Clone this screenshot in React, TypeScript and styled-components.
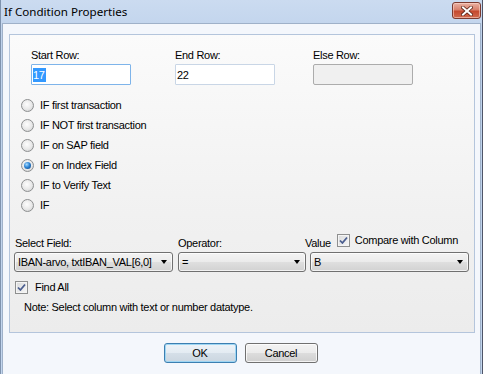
import React from "react";
import styled, { createGlobalStyle } from "styled-components";

const GlobalStyle = createGlobalStyle`
  html, body {
    margin: 0;
    padding: 0;
    background: #ffffff;
  }
  body {
    font-family: "Liberation Sans", Arial, sans-serif;
    font-size: 11px;
    letter-spacing: -0.3px;
    color: #000;
  }
`;

const SWindow = styled.div`
  width: 483px;
  height: 374px;
  box-sizing: border-box;
  border-left: 1px solid #7f93ae;
  border-right: 1px solid #4f5568;
  background: linear-gradient(#cbdbf0, #bed2ec 40px, #c3d6ee);
  display: flex;
  flex-direction: column;
  overflow: hidden;
`;

const STitleBar = styled.div`
  height: 23px;
  flex: none;
  display: flex;
  align-items: flex-start;
  justify-content: space-between;
  padding: 0 1px 0 3px;
`;

const STitle = styled.div`
  font-family: "Noto Sans", "Open Sans", sans-serif;
  font-size: 11.6px;
  letter-spacing: 0;
  line-height: 23px;
  color: #000;
`;

const SCloseButton = styled.div`
  margin-top: 2px;
  width: 29px;
  height: 17px;
  box-sizing: border-box;
  border: 1px solid #7b3a30;
  border-radius: 3px;
  background: linear-gradient(#eab2a4 0%, #d8806c 45%, #c5492f 55%, #d06a4f 100%);
  box-shadow: inset 0 0 0 1px rgba(255, 220, 210, 0.55);
  display: flex;
  align-items: center;
  justify-content: center;
`;

const SClient = styled.div`
  flex: 1;
  margin: 0 1px;
  border: 1px solid #9fb1c9;
  border-bottom: none;
  background: #f4f7fc;
  display: flex;
  flex-direction: column;
`;

const SPanel = styled.div`
  margin: 10px 0 0 6px;
  width: 466px;
  height: 299px;
  box-sizing: border-box;
  border: 1px solid #b4c5dc;
  background: linear-gradient(#fbfbfb, #f1f1f1 60%, #ececec);
  display: flex;
  flex-direction: column;
`;

const STopRow = styled.div`
  display: grid;
  grid-template-columns: 144px 138px 100px;
  padding: 14px 0 0 21px;
`;

const SField = styled.div`
  display: flex;
  flex-direction: column;
`;

const SLabel = styled.div`
  line-height: 13px;
  margin-bottom: 2px;
  white-space: nowrap;
`;

const STextBox = styled.div<{ $focused?: boolean; $disabled?: boolean }>`
  width: 100px;
  height: 21px;
  box-sizing: border-box;
  border: 1px solid
    ${(p) => (p.$disabled ? "#acacac" : p.$focused ? "#7eb4ea" : "#c9d6e6")};
  border-radius: ${(p) => (p.$disabled ? "2px" : "1px")};
  background: ${(p) => (p.$disabled ? "#f0f0f0" : "#ffffff")};
  padding: 0 1px;
  display: flex;
  align-items: center;
`;

const SSelection = styled.span`
  background: #3399ff;
  color: #fff;
  line-height: 14px;
  padding-right: 1px;
`;

const SRadioList = styled.div`
  margin-top: 10px;
  padding-left: 11px;
  display: flex;
  flex-direction: column;
`;

const SRadioRow = styled.div`
  height: 20px;
  display: flex;
  align-items: center;
  gap: 6px;
`;

const SRadio = styled.span<{ $checked?: boolean }>`
  width: 13px;
  height: 13px;
  box-sizing: border-box;
  border-radius: 50%;
  border: 1px solid #8d8f90;
  background: radial-gradient(circle at 45% 40%, #fdfdfd 0%, #e8e8e8 55%, #c4c6c7 100%);
  display: flex;
  align-items: center;
  justify-content: center;
  flex: none;

  &::after {
    content: "";
    display: ${(p) => (p.$checked ? "block" : "none")};
    width: 7px;
    height: 7px;
    border-radius: 50%;
    background: radial-gradient(circle at 38% 35%, #a9dcff 0%, #2f86d6 45%, #0c3e78 100%);
  }
`;

const SSelectGrid = styled.div`
  margin-top: 19px;
  padding-left: 4px;
  display: grid;
  grid-template-columns: 164px 127px 164px;
  grid-template-rows: 16px 20px;
  row-gap: 2px;
`;

const SGridLabel = styled.div<{ $indent?: number }>`
  display: flex;
  align-items: flex-end;
  padding-left: ${(p) => p.$indent ?? 0}px;
  line-height: 13px;
  white-space: nowrap;
`;

const SValueLabel = styled.div`
  display: flex;
  align-items: flex-start;
  gap: 5px;
  white-space: nowrap;

  & > span:first-child {
    padding-top: 3px;
    line-height: 13px;
    margin-right: 1px;
  }
`;

const SCheckText = styled.span`
  line-height: 13px;
`;

const SCombo = styled.div<{ $width: number; $offset?: number }>`
  width: ${(p) => p.$width}px;
  margin-left: ${(p) => p.$offset ?? 0}px;
  height: 20px;
  box-sizing: border-box;
  border: 1px solid #707070;
  border-radius: 3px;
  background: linear-gradient(#f3f3f3 0%, #ebebeb 50%, #dfdfdf 50%, #d2d2d2 100%);
  box-shadow: inset 0 0 0 1px rgba(255, 255, 255, 0.7);
  display: flex;
  align-items: center;
  padding: 0 5px 0 3px;
  gap: 4px;
`;

const SComboText = styled.span`
  flex: 1;
  overflow: hidden;
  white-space: nowrap;
  line-height: 14px;
`;

const SArrow = styled.span`
  width: 0;
  height: 0;
  border-left: 3.5px solid transparent;
  border-right: 3.5px solid transparent;
  border-top: 4px solid #000;
  flex: none;
`;

const SCheckRow = styled.div`
  margin-top: 7px;
  height: 16px;
  padding-left: 5px;
  display: flex;
  align-items: center;
  gap: 7px;
`;

const SCheckBox = styled.span`
  width: 13px;
  height: 13px;
  box-sizing: border-box;
  border: 1px solid #8e8f8f;
  background: linear-gradient(135deg, #d9dadb, #f7f7f7);
  box-shadow: inset 0 0 0 1px #f4f4f4;
  display: flex;
  align-items: center;
  justify-content: center;
  flex: none;
`;

const SNote = styled.div`
  margin-top: 6px;
  padding-left: 14px;
  line-height: 13px;
`;

const SButtonBar = styled.div`
  margin-top: 10px;
  display: flex;
  justify-content: center;
  gap: 8px;
  padding-right: 2px;
`;

const SButton = styled.div<{ $default?: boolean }>`
  width: 73px;
  height: 20px;
  box-sizing: border-box;
  border-radius: 3px;
  border: 1px solid ${(p) => (p.$default ? "#3c7fb1" : "#707070")};
  background: ${(p) =>
    p.$default
      ? "linear-gradient(#edf3f8 0%, #e3ebf2 50%, #d5dfe8 50%, #cbd6e0 100%)"
      : "linear-gradient(#f3f3f3 0%, #ebebeb 50%, #dddddd 50%, #cfcfcf 100%)"};
  box-shadow: inset 0 0 0 1px
    ${(p) => (p.$default ? "#9fd6f3" : "rgba(255, 255, 255, 0.75)")};
  display: flex;
  align-items: center;
  justify-content: center;
`;

const CheckMark = () => (
  <svg width="9" height="9" viewBox="0 0 9 9">
    <path
      d="M1 4.5 L3.4 7 L8 1.5"
      fill="none"
      stroke="#4a5d8f"
      strokeWidth="1.8"
      strokeLinejoin="round"
    />
  </svg>
);

const CloseGlyph = () => (
  <svg width="12" height="10" viewBox="0 0 12 10">
    <path d="M2 1.5 L10 8.5 M10 1.5 L2 8.5" stroke="#5a2418" strokeWidth="3.6" strokeLinecap="square" />
    <path d="M2 1.5 L10 8.5 M10 1.5 L2 8.5" stroke="#ffffff" strokeWidth="2" strokeLinecap="square" />
  </svg>
);

const radios = [
  "IF first transaction",
  "IF NOT first transaction",
  "IF on SAP field",
  "IF on Index Field",
  "IF to Verify Text",
  "IF",
];

export default function App() {
  const [selected] = React.useState(3);

  return (
    <>
      <GlobalStyle />
      <SWindow>
        <STitleBar>
          <STitle>If Condition Properties</STitle>
          <SCloseButton>
            <CloseGlyph />
          </SCloseButton>
        </STitleBar>
        <SClient>
          <SPanel>
            <STopRow>
              <SField>
                <SLabel>Start Row:</SLabel>
                <STextBox $focused>
                  <SSelection>17</SSelection>
                </STextBox>
              </SField>
              <SField>
                <SLabel>End Row:</SLabel>
                <STextBox>22</STextBox>
              </SField>
              <SField>
                <SLabel>Else Row:</SLabel>
                <STextBox $disabled />
              </SField>
            </STopRow>

            <SRadioList>
              {radios.map((text, i) => (
                <SRadioRow key={text}>
                  <SRadio $checked={i === selected} />
                  <span>{text}</span>
                </SRadioRow>
              ))}
            </SRadioList>

            <SSelectGrid>
              <SGridLabel $indent={1}>Select Field:</SGridLabel>
              <SGridLabel>Operator:</SGridLabel>
              <SValueLabel>
                <span>Value</span>
                <SCheckBox>
                  <CheckMark />
                </SCheckBox>
                <SCheckText>Compare with Column</SCheckText>
              </SValueLabel>

              <SCombo $width={159}>
                <SComboText>IBAN-arvo, txtIBAN_VAL[6,0]</SComboText>
                <SArrow />
              </SCombo>
              <SCombo $width={128}>
                <SComboText>=</SComboText>
                <SArrow />
              </SCombo>
              <SCombo $width={159} $offset={5}>
                <SComboText>B</SComboText>
                <SArrow />
              </SCombo>
            </SSelectGrid>

            <SCheckRow>
              <SCheckBox>
                <CheckMark />
              </SCheckBox>
              <span>Find All</span>
            </SCheckRow>

            <SNote>Note: Select column with text or number datatype.</SNote>
          </SPanel>

          <SButtonBar>
            <SButton $default>OK</SButton>
            <SButton>Cancel</SButton>
          </SButtonBar>
        </SClient>
      </SWindow>
    </>
  );
}
